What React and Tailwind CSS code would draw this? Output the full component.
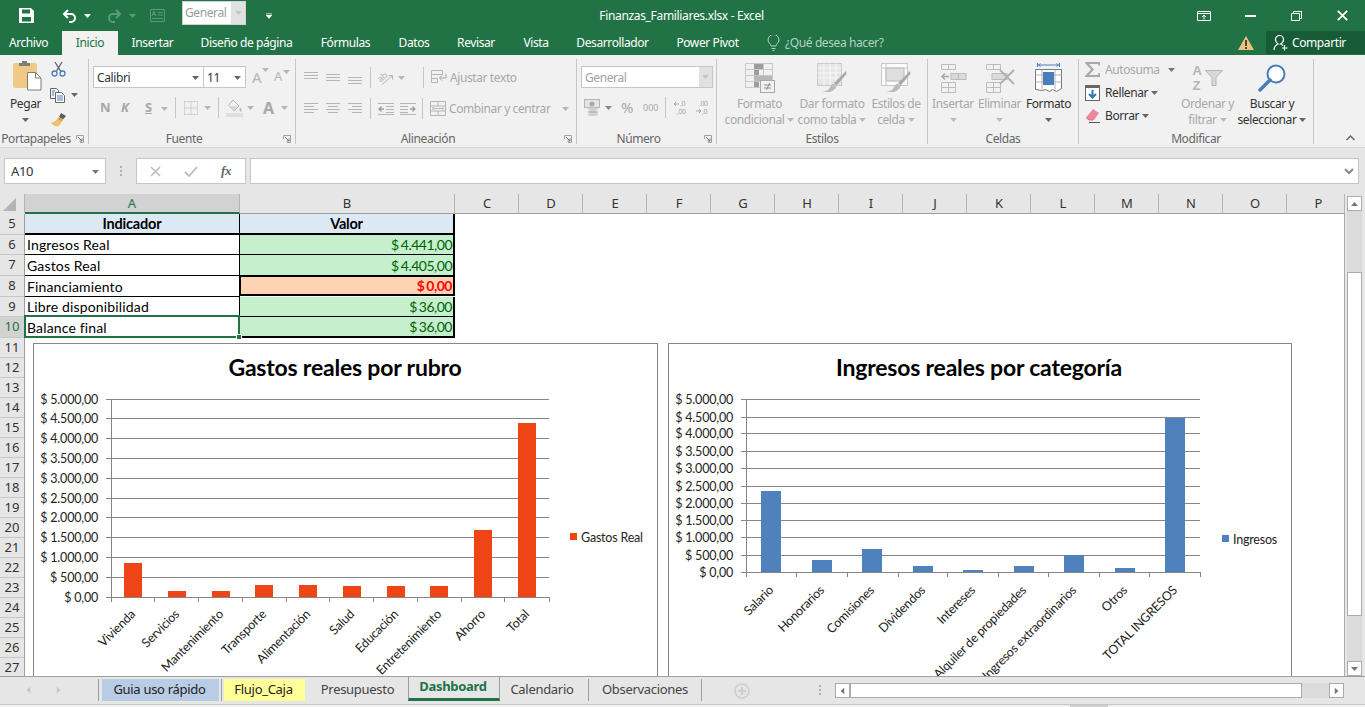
import React from "react";

const GRAY = "#b5b5b5";
const LINE = "#868686";

function Caret({ c = GRAY, className = "" }) {
  return (
    <svg width="7" height="4" viewBox="0 0 7 4" className={className}>
      <path d="M0 0h7L3.5 4z" fill={c} />
    </svg>
  );
}

function Lines({ rows, w = 15, h = 14, c = GRAY }) {
  // rows: [y, x1, x2]
  return (
    <svg width={w} height={h} viewBox={`0 0 ${w} ${h}`}>
      {rows.map((r, i) => (
        <rect key={i} x={r[1]} y={r[0]} width={r[2] - r[1]} height="1" fill={c} />
      ))}
    </svg>
  );
}

const alignTop = [[1, 0, 14], [4, 0, 14], [7, 0, 14]];
const alignMid = [[3, 0, 14], [6, 0, 14], [9, 0, 14]];
const alignBot = [[6, 0, 14], [9, 0, 14], [12, 0, 14]];
const alignL = [[1, 0, 14], [4, 0, 10], [7, 0, 14], [10, 0, 10]];
const alignC = [[1, 0, 14], [4, 2, 12], [7, 0, 14], [10, 2, 12]];
const alignR = [[1, 0, 14], [4, 4, 14], [7, 0, 14], [10, 4, 14]];

function SaveIcon() {
  return (
    <svg width="15" height="15" viewBox="0 0 15 15">
      <path fillRule="evenodd" fill="#fff" d="M0 0h12l3 3v12H0zM3 1.500v4h8v-4zM3 9v4.500h9V9z" />
    </svg>
  );
}

function UndoIcon({ c, flip }) {
  return (
    <svg width="15" height="14" viewBox="0 0 15 14" className={flip ? "-scale-x-100" : ""}>
      <path d="M6 1L2 5l4 4M2 5h7a4 4 0 0 1 0 8H7" fill="none" stroke={c} strokeWidth="2" />
    </svg>
  );
}

function PasteIcon() {
  return (
    <svg width="29" height="31" viewBox="0 0 29 31">
      <rect x="0" y="3" width="24" height="25" rx="2" fill="#f0c987" />
      <path d="M6 6V3h3V1h5v2h3v3z" fill="#7d7d7d" />
      <path d="M14.500 12.500h8l5.500 5.500v12H14.500z" fill="#fff" stroke="#7d7d7d" />
      <path d="M22.500 12.500V18H28" fill="none" stroke="#7d7d7d" />
    </svg>
  );
}

function CutIcon() {
  return (
    <svg width="15" height="16" viewBox="0 0 15 16">
      <path d="M4 1l5.500 9M11 1L5.500 10" stroke="#5f5f5f" strokeWidth="1.300" fill="none" />
      <circle cx="3.500" cy="12.500" r="2.500" fill="none" stroke="#4a7eba" strokeWidth="1.300" />
      <circle cx="11.500" cy="12.500" r="2.500" fill="none" stroke="#4a7eba" strokeWidth="1.300" />
    </svg>
  );
}

function CopyIcon() {
  return (
    <svg width="16" height="15" viewBox="0 0 16 15">
      <path d="M.5.500h6l2 2V4M.5.500v10H5" fill="none" stroke="#666" />
      <path d="M5.500 4.500h6l3 3v7h-9z" fill="#fff" stroke="#666" />
      <path d="M7 8h6M7 10h6M7 12h6M2 3h3M2 5h2M2 7h2" stroke="#4a7eba" />
    </svg>
  );
}

function BrushIcon() {
  return (
    <svg width="17" height="15" viewBox="0 0 17 15">
      <path d="M11 1l5 3-3 3.500-4-2.500z" fill="#5e5e5e" />
      <path d="M8.500 5l4.500 3-4.500 6.500-4-.5-4-3.500c3 .5 5.500-1.500 8-5.500z" fill="#f0bf6c" />
      <path d="M9 5.500l3.500 2.300-1 1.500L7.800 7z" fill="#d69b3f" />
    </svg>
  );
}

function BorderIcon() {
  return (
    <svg width="14" height="14" viewBox="0 0 14 14">
      <path d="M.5.500h13v13H.5zM7 .500v13M.5 7h13" fill="none" stroke={GRAY} strokeDasharray="1 1" />
    </svg>
  );
}

function FillIcon() {
  return (
    <svg width="17" height="18" viewBox="0 0 17 18">
      <path d="M7 1l6 6-5 5-5.500-5.500z" fill="none" stroke={GRAY} />
      <path d="M3 7h9l-4 5z" fill="#d8d8d8" />
      <path d="M14 8c1 2 2 3 1.500 4s-2 .5-2-.5.300-2 .5-3.500z" fill={GRAY} />
      <rect x="0" y="14" width="17" height="4" fill="#dfdfdf" />
    </svg>
  );
}

function OrientIcon() {
  return (
    <svg width="22" height="22" viewBox="-3 -4 22 22" className="-m-[3px] -my-[4px]">
      <text x="5" y="9" fontSize="9" textAnchor="middle" fill={GRAY} transform="rotate(-40 5 7)" className="font-['Noto_Sans',sans-serif]">ab</text>
      <path d="M4 13.500L14 5M10.500 4.500H14.500V8.500" fill="none" stroke={GRAY} />
    </svg>
  );
}

function IndentIcon({ flip }) {
  return (
    <svg width="16" height="12" viewBox="0 0 16 12" className={flip ? "-scale-x-100" : ""}>
      <path d="M0 .500h16M8 3.500h8M8 6.500h8M8 9.500h8M0 11.500h16" stroke={GRAY} />
      <path d="M6 6H1M3.500 3.500L1 6l2.500 2.500" fill="none" stroke="#9d9d9d" strokeWidth="1.300" />
    </svg>
  );
}

function WrapIcon() {
  return (
    <svg width="16" height="15" viewBox="0 0 16 15">
      <path d="M.5.500h11v4H.5zM.5 4.500v4h6M.5 8.500v4h6v-4" fill="none" stroke={GRAY} />
      <path d="M15 4v4H9M11 5.500L8.500 8l2.500 2.500" fill="none" stroke="#a5a5a5" />
    </svg>
  );
}

function MergeIcon() {
  return (
    <svg width="16" height="15" viewBox="0 0 16 15">
      <path d="M.5.500h15v14H.5zM.5 5h15M.5 10h15M8 .500V5M8 10v4.500" fill="none" stroke={GRAY} />
      <path d="M3 7.500h10M3 6v3M13 6v3" fill="none" stroke={GRAY} />
    </svg>
  );
}

function MoneyIcon() {
  return (
    <svg width="16" height="17" viewBox="0 0 16 17">
      <rect x=".5" y=".5" width="15" height="8" fill="#e4e4e4" stroke={GRAY} />
      <circle cx="8" cy="5" r="2.500" fill="#a9a9a9" />
      <ellipse cx="9" cy="10" rx="5" ry="1.500" fill="#cfcfcf" />
      <ellipse cx="9" cy="13" rx="5" ry="1.500" fill="#bdbdbd" />
      <ellipse cx="9" cy="15.500" rx="5" ry="1.500" fill="#cfcfcf" />
    </svg>
  );
}

function DecimalIcon({ top, bottom, left }) {
  return (
    <svg width="16" height="15" viewBox="0 0 16 15">
      <text x={left ? 7 : 4} y="6" fontSize="7" fill="#a5a5a5" className="font-['Noto_Sans',sans-serif]">{top}</text>
      <text x={left ? 4 : 7} y="14" fontSize="7" fill="#a5a5a5" className="font-['Noto_Sans',sans-serif]">{bottom}</text>
      <path d={left ? "M6 4H1M3 2L1 4l2 2" : "M1 11h5M4 9l2 2-2 2"} fill="none" stroke="#a5a5a5" />
    </svg>
  );
}

function CondIcon() {
  return (
    <svg width="30" height="30" viewBox="0 0 30 30">
      <path d="M.5.500h27v24H.5zM9.500.500v24M18.500.500v24M.5 6.500h27M.5 12.500h27M.5 18.500h27" fill="none" stroke="#c8c8c8" />
      <rect x="9" y="1" width="9" height="5" fill="#9d9d9d" />
      <rect x="9" y="7" width="5" height="5" fill="#9d9d9d" />
      <rect x="9" y="13" width="18" height="5" fill="#b7b7b7" />
      <rect x="9" y="19" width="5" height="5" fill="#9d9d9d" />
      <rect x="15.500" y="17.500" width="14" height="12" fill="#f1f1f1" stroke="#a8a8a8" />
      <path d="M19 22h7M19 25h7M24.500 20l-3 7" stroke="#8e8e8e" fill="none" />
    </svg>
  );
}

function TableIcon({ cell }) {
  return (
    <svg width="30" height="30" viewBox="0 0 30 30">
      {cell ? (
        <>
          <rect x=".5" y=".5" width="26" height="22" fill="#fbfbfb" stroke="#c8c8c8" />
          <rect x="5" y="5" width="18" height="13" fill="#dedede" stroke="#b9b9b9" />
          <path d="M.5 5h26M5 .500v22" stroke="#c8c8c8" />
        </>
      ) : (
        <>
          <rect x=".5" y=".5" width="24" height="22" fill="#e6e6e6" stroke="#c8c8c8" />
          <path d="M.5 5h24M.5 10h24M.5 15h24M7 .500v22M13 .500v22M19 .500v22" stroke="#f8f8f8" />
        </>
      )}
      <path d="M29 8L17 20l2.500 2.500L29.500 11z" fill="#a9a9a9" />
      <path d="M16.500 20.500l3 3c-1 3-4 4-6 5.500H5c4-1 7-2 8-5 .500-1.500 2-3 3.500-3.500z" fill="#bcbcbc" />
    </svg>
  );
}

function InsertIcon() {
  return (
    <svg width="27" height="30" viewBox="0 0 27 30">
      <path d="M1.500 1.500h14v5h-14zM8.500 1.500v5M1.500 19.500h14v10h-14zM1.500 24.500h14M8.500 19.500v10" fill="none" stroke="#bdbdbd" />
      <rect x="11" y="10.500" width="15" height="6" fill="#dadada" stroke="#bdbdbd" />
      <path d="M18.500 10.500v6" stroke="#bdbdbd" />
      <path d="M9 13.500H2M5 10.500l-3 3 3 3" fill="none" stroke="#a8a8a8" strokeWidth="1.500" />
    </svg>
  );
}

function DeleteIcon() {
  return (
    <svg width="30" height="30" viewBox="0 0 30 30">
      <path d="M1.500 1.500h14v5h-14zM8.500 1.500v5M1.500 19.500h14v10h-14zM1.500 24.500h14M8.500 19.500v10" fill="none" stroke="#bdbdbd" />
      <rect x="7" y="10.500" width="15" height="6" fill="#dadada" stroke="#bdbdbd" />
      <path d="M15 7l14 14M29 7L15 21" stroke="#b0b0b0" strokeWidth="1.800" />
    </svg>
  );
}

function FormatIcon() {
  return (
    <svg width="28" height="31" viewBox="0 0 28 31">
      <path d="M1 1v4M23 1v4M2 3h20M2 3l2-1.500M2 3l2 1.500M22 3l-2-1.500M22 3l-2 1.500" transform="translate(1.500 0)" fill="none" stroke="#4a7eba" />
      <path d="M.5 7.500h26v19l-5 3-4-2-3 2-4-2-3 1-7-1z" fill="#fff" stroke="#777" />
      <path d="M.5 13h26M.5 20h26M7 7.500v20M20 7.500v20" stroke="#b5b5b5" />
      <rect x="8" y="10" width="11" height="13" fill="#4a7eba" />
    </svg>
  );
}

function SigmaIcon() {
  return (
    <svg width="16" height="15" viewBox="0 0 16 15">
      <path d="M0 0h15v3.500h-1.500L13 2H4l5 5.500L4 13h9l.5-2H15v4H0v-1l6-6.500L0 1z" fill="#a8a8a8" />
    </svg>
  );
}

function FillDownIcon() {
  return (
    <svg width="15" height="16" viewBox="0 0 15 16">
      <rect x=".5" y=".5" width="14" height="15" fill="#fff" stroke="#666" />
      <rect x="0" y="0" width="15" height="3" fill="#666" />
      <path d="M7.500 5v8M4 9l3.500 3.500L11 9" fill="none" stroke="#2f75b5" strokeWidth="2" />
    </svg>
  );
}

function EraserIcon() {
  return (
    <svg width="15" height="14" viewBox="0 0 15 14">
      <path d="M8 0l6 4-5 7H4L1 8.500z" fill="#e98a9b" />
      <path d="M1 8.500L4 11h4" fill="none" stroke="#d96c80" />
      <path d="M4 13.500h11" stroke="#555" />
    </svg>
  );
}

function SortIcon() {
  return (
    <div className="flex items-center">
      <div className="w-[12px] text-[13px] font-bold leading-[15px] text-[#b5b5b5] font-['Liberation_Sans',sans-serif]">
        A<br />Z
      </div>
      <svg width="18" height="16" viewBox="0 0 18 16">
        <path d="M.5.500h17L11 7.500v8H7v-8z" fill="#d8d8d8" stroke="#b5b5b5" />
      </svg>
    </div>
  );
}

function SearchIcon() {
  return (
    <svg width="29" height="28" viewBox="0 0 29 28">
      <circle cx="18" cy="10" r="8.500" fill="#fff" stroke="#4a7eba" strokeWidth="2" />
      <path d="M12 16L2 26" stroke="#4a7eba" strokeWidth="3.500" strokeLinecap="round" />
    </svg>
  );
}

function Launcher() {
  return (
    <svg width="8" height="8" viewBox="0 0 8 8">
      <path d="M.5 4V.5H7.500V7.500H4" fill="none" stroke="#9f9f9f" />
      <path d="M2 2l4 4M6 3.500V6H3.500" fill="none" stroke="#777" />
    </svg>
  );
}

function Group({ w, label, launcher, children }) {
  return (
    <div className={`flex flex-col border-r border-[#c6c6c6] h-[85px] shrink-0 ${w}`}>
      <div className="h-[75px]">{children}</div>
      <div className="flex items-center h-[10px] text-[#666] text-[12px]">
        <div className="flex-1 text-center whitespace-nowrap">{label}</div>
        {launcher && (
          <div className="w-[16px] flex justify-center pr-[1px]">
            <Launcher />
          </div>
        )}
      </div>
    </div>
  );
}

function BigBtn({ w, icon, lines, arrow, dark }) {
  return (
    <div className={`flex flex-col items-center shrink-0 ${w} ${dark ? "text-[#333]" : "text-[#a8a8a8]"}`}>
      <div className="h-[37px] flex items-center justify-center">{icon}</div>
      <div className="h-[16px] leading-[16px] whitespace-nowrap">{lines[0]}</div>
      <div className="h-[16px] leading-[16px] flex items-center gap-[3px] whitespace-nowrap">
        {lines[1]}
        {arrow && <Caret c={dark ? "#666" : "#bbb"} />}
      </div>
    </div>
  );
}

const tabs = [
  ["Archivo", "w-[62px] pr-[5px]"],
  ["Inicio", "w-[56px] bg-[#f1f1f1] text-[#217346]"],
  ["Insertar", "w-[69px]"],
  ["Diseño de página", "w-[119px]"],
  ["Fórmulas", "w-[79px]"],
  ["Datos", "w-[58px]"],
  ["Revisar", "w-[66px]"],
  ["Vista", "w-[54px]"],
  ["Desarrollador", "w-[99px]"],
  ["Power Pivot", "w-[91px]"],
];

const cols = [
  ["A", "w-[215px] bg-[#d2d2d2] text-[#217346] border-b-2 border-b-[#217346]"],
  ["B", "w-[215px]"],
  ["C", "w-[64px] pl-px"], ["D", "w-[64px] pl-px"], ["E", "w-[64px] pl-px"], ["F", "w-[64px] pl-px"], ["G", "w-[64px] pl-px"],
  ["H", "w-[64px] pl-px"], ["I", "w-[64px] pl-px"], ["J", "w-[64px] pl-px"], ["K", "w-[64px] pl-px"], ["L", "w-[64px] pl-px"],
  ["M", "w-[64px] pl-px"], ["N", "w-[64px] pl-px"], ["O", "w-[64px] pl-px"], ["P", "w-[58px] pl-[6px]"],
];

const rowHeads = [
  [5, "h-[21px]"], [6, "h-[20px]"], [7, "h-[21px]"], [8, "h-[21px]"], [9, "h-[20px]"],
  [10, "h-[21px] bg-[#d2d2d2] text-[#217346]"],
  ...[11, 12, 13, 14, 15, 16, 17, 18, 19, 20, 21, 22, 23, 24, 25, 26, 27].map((n) => [n, "h-[20px]"]),
];

const GASTOS = {
  title: "Gastos reales por rubro",
  titleX: 345,
  x0: 111,
  x1: 549,
  grid: [399, 418, 438, 458, 478, 498, 517, 537, 557, 577, 597],
  ticks: [111, 154, 198, 242, 286, 329, 373, 417, 461, 504, 549],
  labelX: 98,
  barW: 18,
  color: "#ef4516",
  labelY: 615,
  bars: [
    ["Vivienda", 124, 563], ["Servicios", 168, 591], ["Mantenimiento", 212, 591], ["Transporte", 255, 585],
    ["Alimentación", 299, 585], ["Salud", 343, 586], ["Educación", 387, 586], ["Entretenimiento", 430, 586],
    ["Ahorro", 474, 530], ["Total", 518, 423],
  ],
  legend: ["Gastos Real", 570, 533],
  box: "34 344 623 340",
};

const INGRESOS = {
  title: "Ingresos reales por categoría",
  titleX: 979,
  x0: 746,
  x1: 1200,
  grid: [399, 417, 433, 451, 468, 486, 503, 520, 537, 555, 572],
  ticks: [746, 796, 847, 898, 947, 998, 1048, 1099, 1149, 1200],
  labelX: 733,
  barW: 20,
  color: "#4f81bd",
  labelY: 591,
  bars: [
    ["Salario", 761, 491], ["Honorarios", 812, 560], ["Comisiones", 862, 549], ["Dividendos", 913, 566],
    ["Intereses", 963, 570], ["Alquiler de propiedades", 1014, 566], ["Ingresos extraordinarios", 1064, 555],
    ["Otros", 1115, 568], ["TOTAL INGRESOS", 1165, 418],
  ],
  legend: ["Ingresos", 1222, 535],
  box: "669 344 622 340",
};

const yLabels = ["$ 5.000,00", "$ 4.500,00", "$ 4.000,00", "$ 3.500,00", "$ 3.000,00", "$ 2.500,00", "$ 2.000,00", "$ 1.500,00", "$ 1.000,00", "$ 500,00", "$ 0,00"];

function Chart({ d, w }) {
  const base = d.grid[d.grid.length - 1];
  const [, , bw, bh] = d.box.split(" ");
  return (
    <div className={`border border-[#868686] bg-white h-[342px] shrink-0 ${w}`}>
      <svg width={bw} height={bh} viewBox={d.box} className="block font-['Lato',sans-serif] tracking-[-0.2px]">
        <text x={d.titleX} y="376" textAnchor="middle" fontSize="23" fontWeight="700" fill="#000">{d.title}</text>
        {d.grid.map((y, i) => (
          <g key={y}>
            <path d={`M${d.x0 - 5} ${y + 0.5}H${d.x1}`} stroke={LINE} />
            <text x={d.labelX} y={y + 5} textAnchor="end" fontSize="12.500" fill="#222">{yLabels[i]}</text>
          </g>
        ))}
        <path d={`M${d.x0 + 0.5} ${d.grid[0]}V${base + 5}`} stroke={LINE} />
        {d.ticks.map((x) => (
          <path key={x} d={`M${x + 0.5} ${base}v5`} stroke={LINE} />
        ))}
        {d.bars.map(([name, x, top]) => (
          <g key={name}>
            <rect x={x} y={top} width={d.barW} height={base - top} fill={d.color} />
            <text
              x={x + d.barW / 2 + 3}
              y={d.labelY}
              textAnchor="end"
              fontSize="12.500"
              fill="#222"
              transform={`rotate(-45 ${x + d.barW / 2 + 3} ${d.labelY})`}
            >
              {name}
            </text>
          </g>
        ))}
        <rect x={d.legend[1]} y={d.legend[2]} width="7" height="7" fill={d.color} />
        <text x={d.legend[1] + 11} y={d.legend[2] + 9} fontSize="12.500" fill="#222">{d.legend[0]}</text>
      </svg>
    </div>
  );
}

const tableRows = [
  ["Ingresos Real", "$ 4.441,00", "h-[20px]"],
  ["Gastos Real", "$ 4.405,00", "h-[21px]"],
  ["Financiamiento", "$ 0,00", "h-[21px]"],
  ["Libre disponibilidad", "$ 36,00", "h-[20px]"],
  ["Balance final", "$ 36,00", "h-[21px]"],
];

function CellTable() {
  return (
    <div className="grid grid-cols-[215px_215px] w-[430px] text-[14px] text-black font-['Lato',sans-serif]">
      <div className="h-[21px] bg-[#dce9f5] border-r border-b-2 border-black font-bold text-[14.500px] tracking-[-0.2px] text-center leading-[19px]">Indicador</div>
      <div className="h-[21px] bg-[#dce9f5] border-r-2 border-b-2 border-black font-bold text-[14.500px] tracking-[-0.2px] text-center leading-[19px]">Valor</div>
      {tableRows.map(([name, val, h], i) => {
        const red = i === 2;
        const sel = i === 4;
        return (
          <React.Fragment key={name}>
            <div className={`relative pl-[2px] flex items-center border-r border-b border-black tracking-[0.15px] ${h}`}>
              {name}
              {sel && (
                <div className="absolute -left-px -top-[2px] -right-px -bottom-px border-2 border-[#217346]">
                  <div className="absolute -right-[4px] -bottom-[4px] w-[6px] h-[6px] bg-[#217346] border border-white" />
                </div>
              )}
            </div>
            <div
              className={`flex items-center justify-end pr-px tracking-[-0.5px] [word-spacing:-1px] whitespace-pre ${h} ${
                red
                  ? "bg-[#fdd3b4] text-[#ff0000] font-bold border-2 border-black -ml-px -mt-px"
                  : `bg-[#c6efce] text-[#006100] border-r-2 border-black ${sel ? "border-b-2" : "border-b"}`
              }`}
            >
              {val}
            </div>
          </React.Fragment>
        );
      })}
    </div>
  );
}

export default function App() {
  return (
    <div className="w-[1365px] h-[707px] overflow-hidden flex flex-col bg-[#e6e6e6] font-['Noto_Sans',sans-serif] text-[12px] tracking-[-0.4px]">
      {/* barra de titulo */}
      <div className="h-[31px] shrink-0 bg-[#217346] flex items-center text-white relative">
        <div className="w-[19px]" />
        <SaveIcon />
        <div className="w-[28px]" />
        <UndoIcon c="#fff" />
        <Caret c="#fff" className="ml-[7px]" />
        <div className="w-[16px]" />
        <UndoIcon c="#5b9a78" flip />
        <Caret c="#5b9a78" className="ml-[7px]" />
        <div className="w-[14px]" />
        <svg width="15" height="13" viewBox="0 0 15 13">
          <path d="M.5.500h14v12H.5zM8 3.500h5M8 6h5M2 9.500h11" fill="none" stroke="#5b9a78" />
          <path d="M2 7l2-5 2 5M3 5.500h2" fill="none" stroke="#5b9a78" />
        </svg>
        <div className="w-[17px]" />
        <div className="w-[64px] h-[24px] -mt-[5px] bg-white border border-[#d2d2d2] flex items-center text-[#9b9b9b]">
          <div className="flex-1 pl-[2px]">General</div>
          <div className="w-[14px] h-full bg-[#e1e1e1] flex items-center justify-center">
            <Caret c="#c4c4c4" />
          </div>
        </div>
        <div className="w-[20px]" />
        <svg width="6" height="6" viewBox="0 0 6 6">
          <path d="M0 .500h6M0 2h6L3 5.500z" fill="#fff" stroke="#fff" strokeWidth=".5" />
        </svg>
        <div className="absolute inset-x-0 top-0 h-[31px] flex items-center justify-center pr-[2px] tracking-[-0.33px] pointer-events-none">
          Finanzas_Familiares.xlsx - Excel
        </div>
        <div className="flex-1" />
        <svg width="14" height="10" viewBox="0 0 14 10">
          <path d="M.5.500h13v9H.5zM.5 2.500h13M7 8.500V4M5 6l2-2 2 2" fill="none" stroke="#fff" />
        </svg>
        <div className="w-[34px]" />
        <div className="w-[11px] h-[2px] bg-white" />
        <div className="w-[35px]" />
        <svg width="11" height="10" viewBox="0 0 11 10">
          <path d="M.5 2.500h8v7h-8zM2.500 2.500v-2h8v7h-2" fill="none" stroke="#fff" />
        </svg>
        <div className="w-[35px]" />
        <svg width="11" height="11" viewBox="0 0 11 11" className="mr-[17px]">
          <path d="M.8.800l9.400 9.400M10.200.800L.8 10.200" stroke="#fff" strokeWidth="1.800" />
        </svg>
      </div>

      {/* pestañas */}
      <div className="h-[24px] shrink-0 bg-[#217346] flex text-white">
        {tabs.map(([t, c]) => (
          <div key={t} className={`h-[24px] flex items-center justify-center ${c}`}>{t}</div>
        ))}
        <div className="w-[14px]" />
        <div className="flex items-center gap-[5px] text-[#b5d1c1]">
          <svg width="13" height="16" viewBox="0 0 13 16">
            <path d="M4 11c0-2-3-3-3-6a5.500 5.500 0 0 1 11 0c0 3-3 4-3 6zM4.500 13.500h4M5.500 15.500h2" fill="none" stroke="#b5d1c1" />
          </svg>
          ¿Qué desea hacer?
        </div>
        <div className="flex-1" />
        <svg width="16" height="14" viewBox="0 0 16 14" className="mt-[5px]">
          <path d="M8 0l8 14H0z" fill="#ecc27d" />
          <rect x="7" y="4" width="2" height="6" fill="#4a4a3a" />
          <rect x="7" y="11" width="2" height="2" fill="#4a4a3a" />
        </svg>
        <div className="w-[12px]" />
        <div className="w-[99px] h-[23px] bg-[#185c37] flex items-center pl-[7px] gap-[4px]">
          <svg width="15" height="16" viewBox="0 0 15 16">
            <path d="M1 15c0-3 2-5 4-6-2-1.500-2.500-3-2.500-4.500a4 4 0 0 1 8 0c0 2-1 3.500-3 4.500 1 .300 2 1 2.500 1.500M11.500 10v5.500M9 13h5.500" fill="none" stroke="#fff" strokeWidth="1.200" />
          </svg>
          Compartir
        </div>
      </div>

      {/* cinta */}
      <div className="h-[93px] shrink-0 bg-[#f1f1f1] border-b border-[#d4d4d4] flex pt-[4px] text-[#333]">
        <Group w="w-[89px]" label="Portapapeles" launcher>
          <div className="flex">
            <div className="w-[50px] flex flex-col items-center pl-[6px]">
              <div className="h-[33px] flex items-center -ml-[1px]"><PasteIcon /></div>
              <div className="h-[4px]" />
              <div className="h-[16px] leading-[16px] -ml-[5px] text-[#333]">Pegar</div>
              <div className="h-[16px] flex items-center -ml-[5px]"><Caret c="#666" /></div>
            </div>
            <div className="flex flex-col">
              <div className="h-[24px] pt-[2px] pl-[1px]"><CutIcon /></div>
              <div className="h-[24px] flex items-center gap-[5px]"><CopyIcon /><Caret c="#666" /></div>
              <div className="h-[24px] flex items-center"><BrushIcon /></div>
            </div>
          </div>
        </Group>

        <Group w="w-[207px]" label="Fuente" launcher>
          <div className="flex items-center h-[22px] mt-[7px] pl-[4px]">
            <div className="w-[111px] h-[22px] pt-px bg-white border border-[#c6c6c6] flex items-center justify-between pl-[3px] pr-[4px]">
              Calibri <Caret c="#666" />
            </div>
            <div className="w-[43px] h-[22px] pt-px bg-white border border-[#c6c6c6] -ml-px flex items-center justify-between pl-[3px] pr-[4px]">
              11 <Caret c="#666" />
            </div>
            <div className="relative w-[20px] ml-[6px] text-[15px] text-[#b5b5b5]">
              A<Caret className="absolute top-[2px] right-[3px]" />
            </div>
            <div className="relative w-[20px] ml-[2px] text-[13px] text-[#b5b5b5]">
              A<Caret className="absolute top-[3px] right-[4px]" />
            </div>
          </div>
          <div className="flex items-center h-[21px] mt-[9px] pl-[11px] text-[#a8a8a8] font-bold text-[13px]">
            <span className="w-[21px]">N</span>
            <span className="w-[24px] italic">K</span>
            <span className="w-[13px] underline">S</span>
            <Caret className="ml-[3px] mt-[2px]" />
            <div className="w-px h-[21px] bg-[#c6c6c6] ml-[7px]" />
            <div className="ml-[8px]"><BorderIcon /></div>
            <Caret className="ml-[6px]" />
            <div className="w-px h-[21px] bg-[#c6c6c6] ml-[7px]" />
            <div className="ml-[7px]"><FillIcon /></div>
            <Caret className="ml-[4px]" />
            <span className="ml-[9px] w-[12px] text-[16px]">A</span>
            <Caret className="ml-[6px]" />
          </div>
        </Group>

        <Group w="w-[281px]" label="Alineación" launcher>
          <div className="flex items-center h-[23px] mt-[7px] pl-[8px]">
            <div className="w-[22px]"><Lines rows={alignTop} /></div>
            <div className="w-[22px]"><Lines rows={alignMid} /></div>
            <div className="w-[22px]"><Lines rows={alignBot} /></div>
            <div className="w-px h-[21px] bg-[#c6c6c6]" />
            <div className="ml-[7px]"><OrientIcon /></div>
            <Caret className="ml-[4px]" />
            <div className="w-px h-[21px] bg-[#c6c6c6] ml-[18px]" />
            <div className="ml-[7px]"><WrapIcon /></div>
            <span className="ml-[3px] text-[#a8a8a8]">Ajustar texto</span>
          </div>
          <div className="flex items-center h-[23px] mt-[8px] pl-[8px]">
            <div className="w-[22px]"><Lines rows={alignL} /></div>
            <div className="w-[22px]"><Lines rows={alignC} /></div>
            <div className="w-[22px]"><Lines rows={alignR} /></div>
            <div className="w-px h-[21px] bg-[#c6c6c6]" />
            <div className="ml-[7px]"><IndentIcon /></div>
            <div className="ml-[6px]"><IndentIcon flip /></div>
            <div className="w-px h-[21px] bg-[#c6c6c6] ml-[6px]" />
            <div className="ml-[7px]"><MergeIcon /></div>
            <span className="ml-[3px] text-[#a8a8a8] whitespace-nowrap">Combinar y centrar</span>
            <Caret className="ml-[11px]" />
          </div>
        </Group>

        <Group w="w-[140px]" label="Número" launcher>
          <div className="h-[22px] w-[132px] mt-[7px] ml-[4px] bg-white border border-[#c6c6c6] flex items-center text-[#a0a0a0]">
            <div className="flex-1 pl-[3px] pt-px">General</div>
            <div className="w-[13px] h-full bg-[#e1e1e1] flex items-center justify-center"><Caret c="#c4c4c4" /></div>
          </div>
          <div className="flex items-center h-[21px] mt-[9px] pl-[7px] text-[#a8a8a8]">
            <MoneyIcon />
            <Caret c="#888" className="ml-[5px]" />
            <span className="ml-[9px] w-[13px] text-[15px]">%</span>
            <span className="ml-[9px] w-[14px] text-[9px] tracking-normal">000</span>
            <div className="w-px h-[21px] bg-[#c6c6c6] ml-[8px]" />
            <div className="ml-[7px]"><DecimalIcon top=",0" bottom=",00" left /></div>
            <div className="ml-[6px]"><DecimalIcon top=",00" bottom=",0" /></div>
          </div>
        </Group>

        <Group w="w-[211px]" label="Estilos">
          <div className="flex pl-[4px]">
            <BigBtn w="w-[77px]" icon={<CondIcon />} lines={["Formato", "condicional"]} arrow />
            <BigBtn w="w-[68px]" icon={<TableIcon />} lines={["Dar formato", "como tabla"]} arrow />
            <BigBtn w="w-[60px]" icon={<TableIcon cell />} lines={["Estilos de", "celda"]} arrow />
          </div>
        </Group>

        <Group w="w-[151px]" label="Celdas">
          <div className="flex pl-[1px]">
            <BigBtn w="w-[48px]" icon={<InsertIcon />} lines={["Insertar", ""]} arrow />
            <BigBtn w="w-[45px]" icon={<DeleteIcon />} lines={["Eliminar", ""]} arrow />
            <BigBtn w="w-[53px]" icon={<FormatIcon />} lines={["Formato", ""]} arrow dark />
          </div>
        </Group>

        <Group w="w-[235px]" label="Modificar">
          <div className="flex">
            <div className="w-[100px] pl-[6px] -mt-px">
              <div className="h-[23px] flex items-center text-[#a8a8a8]">
                <div className="w-[20px]"><SigmaIcon /></div>
                <span className="w-[60px]">Autosuma</span>
                <Caret c="#777" className="ml-[3px]" />
              </div>
              <div className="h-[23px] flex items-center">
                <div className="w-[20px]"><FillDownIcon /></div>
                Rellenar <Caret c="#666" className="ml-[3px]" />
              </div>
              <div className="h-[23px] flex items-center">
                <div className="w-[20px]"><EraserIcon /></div>
                Borrar <Caret c="#666" className="ml-[3px]" />
              </div>
            </div>
            <BigBtn w="w-[57px]" icon={<SortIcon />} lines={["Ordenar y", "filtrar"]} arrow />
            <BigBtn w="w-[72px]" icon={<SearchIcon />} lines={["Buscar y", "seleccionar"]} arrow dark />
          </div>
        </Group>

        <div className="flex-1 flex justify-end items-end pr-[10px] pb-[6px]">
          <svg width="9" height="6" viewBox="0 0 9 6">
            <path d="M.5 5L4.500 1l4 4" fill="none" stroke="#666" strokeWidth="1.500" />
          </svg>
        </div>
      </div>

      {/* barra de formulas */}
      <div className="h-[46px] shrink-0 pt-[10px] pl-[4px] pr-[6px] flex text-[#333]">
        <div className="w-[102px] h-[26px] pt-px bg-white border border-[#c6c6c6] flex items-center justify-between pl-[6px] pr-[6px] text-[13px]">
          A10 <Caret c="#777" />
        </div>
        <div className="w-[30px] h-[26px] flex flex-col items-center justify-center gap-[2px]">
          <div className="w-[2px] h-[2px] bg-[#b0b0b0]" />
          <div className="w-[2px] h-[2px] bg-[#b0b0b0]" />
          <div className="w-[2px] h-[2px] bg-[#b0b0b0]" />
        </div>
        <div className="w-[110px] h-[26px] bg-white border border-[#c6c6c6] flex items-center pl-[13px]">
          <svg width="11" height="11" viewBox="0 0 11 11">
            <path d="M1 1l9 9M10 1l-9 9" stroke="#bdbdbd" strokeWidth="1.500" />
          </svg>
          <svg width="14" height="11" viewBox="0 0 14 11" className="ml-[23px]">
            <path d="M1 6l4 4 8-9" fill="none" stroke="#bdbdbd" strokeWidth="1.800" />
          </svg>
          <span className="ml-[23px] italic font-bold text-[13px] text-[#666] font-['Liberation_Serif',serif]">fx</span>
        </div>
        <div className="ml-[4px] flex-1 h-[26px] bg-white border border-[#c6c6c6] flex items-center justify-end pr-[4px]">
          <svg width="10" height="7" viewBox="0 0 10 7">
            <path d="M1 1l4 4 4-4" fill="none" stroke="#888" strokeWidth="2" />
          </svg>
        </div>
      </div>

      {/* cabecera de columnas */}
      <div className="h-[20px] shrink-0 flex text-[13px] text-[#333] tracking-normal">
        <div className="w-[25px] h-[19px] flex justify-center items-center border-r border-[#b5b5b5]">
          <svg width="13" height="13" viewBox="0 0 13 13" className="mt-[2px] -ml-[6px]">
            <path d="M13 0v13H0z" fill="#b4b4b4" />
          </svg>
        </div>
        {cols.map(([c, k]) => (
          <div key={c} className={`h-[20px] pt-px flex items-center justify-center border-r border-b border-r-[#b5b5b5] border-b-[#9f9f9f] ${k}`}>{c}</div>
        ))}
      </div>

      <div className="flex h-[462px] shrink-0">
        {/* hoja */}
        <div className="w-[1345px] flex overflow-hidden">
          <div className="w-[25px] shrink-0 border-r border-[#9f9f9f] text-[13px] text-[#333] tracking-normal">
            {rowHeads.map(([n, k]) => (
              <div key={n} className={`flex items-center justify-center border-b border-[#c6c6c6] ${k}`}>{n}</div>
            ))}
          </div>
          <div className="relative flex-1 bg-white border-r border-[#ababab]">
            <CellTable />
            <div className="flex gap-[10px] mt-[5px] ml-[8px]">
              <Chart d={GASTOS} w="w-[625px]" />
              <Chart d={INGRESOS} w="w-[624px]" />
            </div>
          </div>
        </div>
        {/* barra vertical */}
        <div className="w-[20px] -mt-[18px] h-[480px] pl-[2px] flex flex-col">
          <div className="w-[15px] h-[15px] bg-white border border-[#ababab] flex items-center justify-center">
            <Caret c="#777" className="rotate-180" />
          </div>
          <div className="w-[15px] h-[61px] bg-[#dbdbdb]" />
          <div className="w-[15px] h-[344px] bg-white border border-[#ababab]" />
          <div className="w-[15px] h-[45px] bg-[#dbdbdb]" />
          <div className="w-[15px] h-[15px] bg-white border border-[#ababab] flex items-center justify-center">
            <Caret c="#777" />
          </div>
        </div>
      </div>

      {/* pestañas de hojas */}
      <div className="h-[29px] shrink-0 border-t border-b border-t-[#9f9f9f] border-b-[#c6c6c6] flex text-[13px] text-[#444] tracking-[-0.3px]">
        <div className="w-[99px] h-[22px] mt-[2px] flex items-center border-r border-[#9f9f9f] pl-[25px] gap-[23px]">
          <Caret c="#c6c6c6" className="rotate-90" />
          <Caret c="#c6c6c6" className="-rotate-90" />
        </div>
        <div className="w-[3px]" />
        <div className="w-[117px] h-[22px] mt-[2px] pr-[2px] bg-[#b8cce4] text-[#222] flex items-center justify-center">Guia uso rápido</div>
        <div className="w-px h-[22px] mt-[2px] ml-[2px] bg-[#9f9f9f]" />
        <div className="w-[81px] h-[22px] mt-[2px] ml-[2px] pr-[2px] bg-[#ffff99] text-[#222] flex items-center justify-center">Flujo_Caja</div>
        <div className="w-[101px] h-[22px] mt-[2px] ml-[2px] flex items-center justify-center">Presupuesto</div>
        <div className="w-[92px] h-[25px] -mt-px pr-[2px] border-l border-r border-[#9f9f9f] border-b-[3px] border-b-[#217346] text-[#217346] font-bold flex items-center justify-center">Dashboard</div>
        <div className="w-[89px] h-[22px] mt-[2px] pr-[4px] border-r border-[#9f9f9f] flex items-center justify-center">Calendario</div>
        <div className="w-[113px] h-[22px] mt-[2px] border-r border-[#9f9f9f] flex items-center justify-center">Observaciones</div>
        <div className="ml-[32px] mt-[6px]">
          <svg width="16" height="16" viewBox="0 0 16 16">
            <circle cx="8" cy="8" r="7" fill="none" stroke="#cdcdcd" strokeWidth="1.500" />
            <path d="M8 4v8M4 8h8" stroke="#cdcdcd" strokeWidth="2" />
          </svg>
        </div>
        <div className="ml-[69px] mt-[8px] flex flex-col gap-[2px]">
          <div className="w-[2px] h-[2px] bg-[#b0b0b0]" />
          <div className="w-[2px] h-[2px] bg-[#b0b0b0]" />
          <div className="w-[2px] h-[2px] bg-[#b0b0b0]" />
        </div>
        <div className="ml-[14px] mt-[6px] w-[509px] h-[15px] flex">
          <div className="w-[15px] h-[15px] bg-white border border-[#ababab] flex items-center justify-center">
            <Caret c="#777" className="rotate-90" />
          </div>
          <div className="w-[452px] h-[15px] bg-white border border-[#ababab]" />
          <div className="flex-1 bg-[#dbdbdb]" />
          <div className="w-[15px] h-[15px] bg-white border border-[#ababab] flex items-center justify-center">
            <Caret c="#777" className="-rotate-90" />
          </div>
        </div>
      </div>

      {/* barra de estado */}
      <div className="h-[2px] shrink-0 bg-[#f1f1f1] flex">
        <div className="ml-[1070px] w-[38px] bg-[#cfcfcf]" />
      </div>
    </div>
  );
}
